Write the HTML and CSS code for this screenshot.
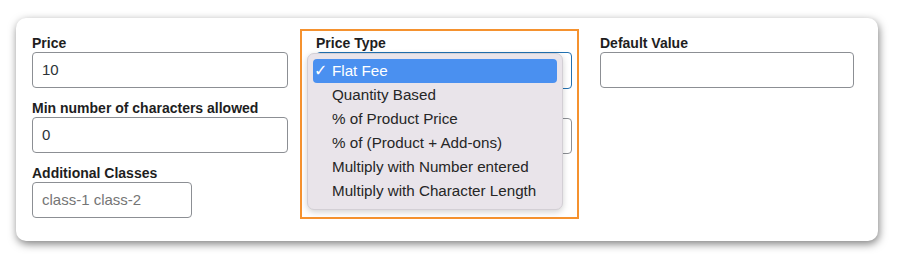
FILE: index.html
```html
<!DOCTYPE html>
<html>
<head>
<meta charset="utf-8">
<link rel="stylesheet" href="styles.css">
</head>
<body>
<div class="card">
  <div class="col">
    <div class="field">
      <label class="lbl">Price</label>
      <div class="input">10</div>
    </div>
    <div class="field">
      <label class="lbl">Min number of characters allowed</label>
      <div class="input">0</div>
    </div>
    <div class="field">
      <label class="lbl">Additional Classes</label>
      <div class="input short placeholder">class-1 class-2</div>
    </div>
  </div>
  <div class="col mid">
    <div class="field">
      <label class="lbl">Price Type</label>
      <div class="input focus"></div>
    </div>
    <div class="field">
      <span class="lbl-space"></span>
      <div class="input"></div>
    </div>
    <div class="highlight-box"></div>
    <ul class="menu">
      <li class="item active"><span class="check">✓</span>Flat Fee</li>
      <li class="item">Quantity Based</li>
      <li class="item">% of Product Price</li>
      <li class="item">% of (Product + Add-ons)</li>
      <li class="item">Multiply with Number entered</li>
      <li class="item">Multiply with Character Length</li>
    </ul>
  </div>
  <div class="col last">
    <div class="field">
      <label class="lbl">Default Value</label>
      <div class="input"></div>
    </div>
  </div>
</div>
</body>
</html>
```
FILE: styles.css
```css
html, body {
  margin: 0;
  padding: 0;
  background: #ffffff;
}
body {
  padding: 18px 22px 20px 16px;
  font-family: "Liberation Sans", Arial, sans-serif;
  color: #1e1e1e;
}
.card {
  box-sizing: border-box;
  width: 862px;
  height: 223px;
  background: #ffffff;
  border-radius: 10px;
  box-shadow: 1px 3px 8px rgba(0, 0, 0, 0.5);
  padding: 16px 0 0 16px;
  display: flex;
  gap: 28px;
}
.col {
  width: 256px;
  display: flex;
  flex-direction: column;
  gap: 11px;
}
.col.last {
  width: 254px;
}
.col.mid {
  position: relative;
}
.field {
  display: flex;
  flex-direction: column;
}
.lbl {
  font-size: 14px;
  font-weight: bold;
  line-height: 18px;
  color: #1e1e1e;
  white-space: nowrap;
}
.lbl-space {
  display: block;
  height: 18px;
}
.input {
  box-sizing: border-box;
  height: 36px;
  border: 1px solid #8c8f94;
  border-radius: 4px;
  padding: 0 10px 0 9px;
  font-size: 15px;
  line-height: 34px;
  color: #2c3338;
  background: #fff;
}
.input.short {
  width: 160px;
}
.input.placeholder {
  color: #757575;
}
.input.focus {
  border: 1.5px solid #2271b1;
  height: 37px;
}
.highlight-box {
  position: absolute;
  left: -16px;
  top: -5px;
  width: 279px;
  height: 190px;
  box-sizing: border-box;
  border: 2px solid #f5922f;
}
.menu {
  position: absolute;
  left: -9px;
  top: 19px;
  width: 256px;
  box-sizing: border-box;
  margin: 0;
  padding: 5px 5px 6px 5px;
  list-style: none;
  background: #e9e4ea;
  border: 1px solid #d3cfd5;
  border-radius: 7px;
  box-shadow: 0 2px 6px rgba(0, 0, 0, 0.18);
}
.item {
  height: 24px;
  line-height: 24px;
  font-size: 15.2px;
  color: #262626;
  padding-left: 19px;
  position: relative;
  white-space: nowrap;
}
.item.active {
  background: #4a90f0;
  color: #ffffff;
  border-radius: 4px;
}
.check {
  position: absolute;
  left: 1px;
  top: 0;
  font-family: "DejaVu Sans", sans-serif;
  font-size: 16px;
}
```
